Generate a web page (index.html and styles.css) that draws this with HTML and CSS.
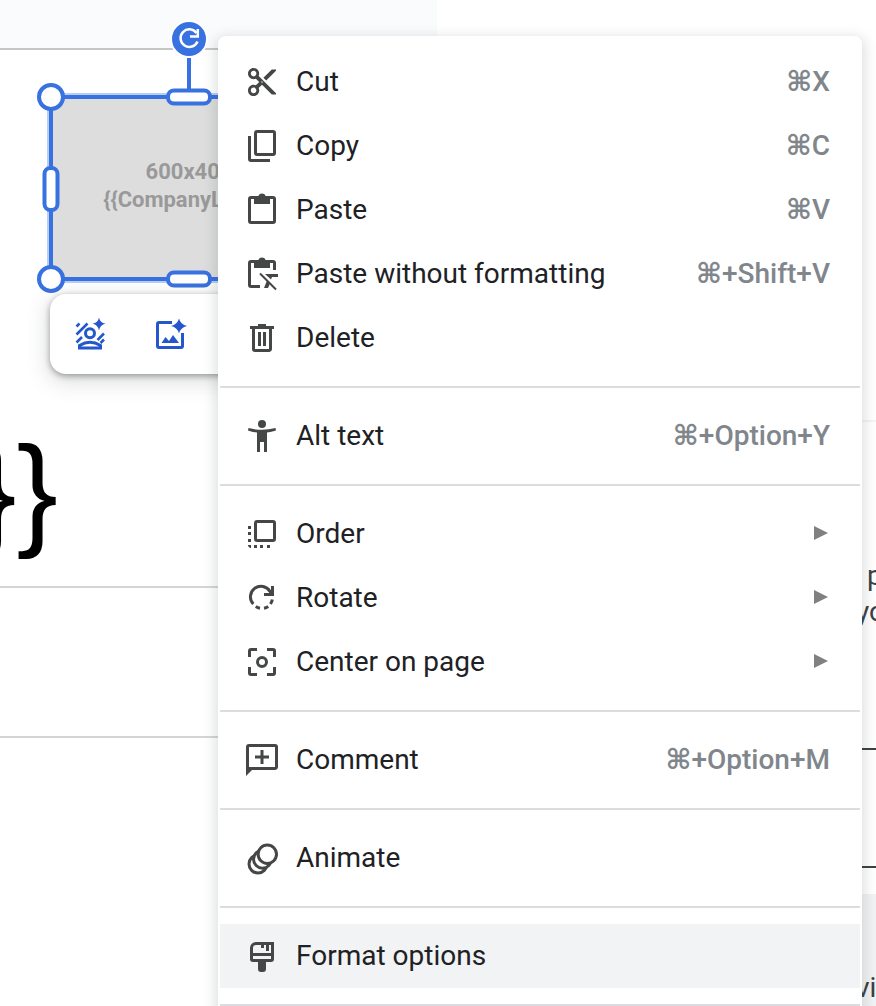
FILE: index.html
```html
<!DOCTYPE html>
<html lang="en">
<head>
<meta charset="utf-8">
<meta name="viewport" content="width=device-width, initial-scale=1">
<title>Slide editor</title>
<link rel="stylesheet" href="styles.css">
</head>
<body>
<div class="app">
  <main class="editor">
    <div class="ruler"></div>
    <section class="stage">
      <div class="picture">
        <p class="picture-text">600x400<br>{{CompanyLogo}}</p>
      </div>
      <svg class="selection" width="320" height="280" viewBox="0 0 320 280" fill="none" aria-hidden="true">
        <rect x="20" y="76" width="280" height="186" stroke="#b9cef4" stroke-width="4"/>
        <rect x="22" y="78" width="276" height="182" stroke="#3871e0" stroke-width="4"/>
        <path d="M160 39V72" stroke="#3871e0" stroke-width="4"/>
        <circle cx="160" cy="20" r="18" fill="#3871e0" stroke="#fff" stroke-width="2"/>
        <path d="M167.500 14A8.800 8.800 0 1 0 168.500 22.500" stroke="#fff" stroke-width="2.500"/>
        <path d="M168.800 10V17.500H161" stroke="#fff" stroke-width="2.500"/>
        <g fill="#fff" stroke="#3871e0" stroke-width="4">
          <circle cx="22" cy="78" r="12"/>
          <circle cx="22" cy="260" r="12"/>
          <rect x="139" y="71.500" width="42" height="13" rx="6"/>
          <rect x="139" y="253.500" width="42" height="13" rx="6"/>
          <rect x="15.500" y="149" width="13" height="42" rx="6"/>
        </g>
      </svg>
      <div class="image-tools" role="toolbar" aria-label="Image tools">
        <button class="tool" type="button" aria-label="Remove background">
          <svg class="icon" viewBox="0 0 36 36" fill="none" aria-hidden="true">
            <g stroke="currentColor" stroke-width="2.600">
              <path d="M4.500 10.500L7.500 7.500M4.500 18.500L15.500 7.500M4.500 26.500L10 21M25.500 24L32 17.500M28.500 27L32 23.500"/>
            </g>
            <circle cx="18" cy="17.300" r="4.500" stroke="currentColor" stroke-width="3"/>
            <path d="M7.500 32V29.500Q18 23 28.500 29.500V32Z" stroke="currentColor" stroke-width="3"/>
            <path d="M27 1.500Q28 7 33.500 7.800Q28 8.800 27 14.500Q26 8.800 20.500 7.800Q26 7 27 1.500Z" fill="currentColor"/>
          </svg>
        </button>
        <button class="tool" type="button" aria-label="Generate image">
          <svg class="icon" viewBox="0 0 36 36" fill="none" aria-hidden="true">
            <path d="M20 6.500H7A1.500 1.500 0 0 0 5.500 8V30A1.500 1.500 0 0 0 7 31.500H29A1.500 1.500 0 0 0 30.500 30V17" stroke="currentColor" stroke-width="3"/>
            <path d="M9.500 27L13.500 21L17 25L21 19L27 27Z" fill="currentColor"/>
            <path d="M27 2.500Q28.500 8.500 35 10Q28.500 11.500 27 17.500Q25.500 11.500 19 10Q25.500 8.500 27 2.500Z" fill="currentColor"/>
          </svg>
        </button>
      </div>
      <div class="slide-title">}}</div>
    </section>
    <section class="notes"></section>
  </main>

  <aside class="sidebar">
    <div class="side-text">
      <p class="side-line side-line-inset">p</p>
      <p class="side-line">yo</p>
    </div>
    <div class="side-box"></div>
    <div class="side-note">vi</div>
  </aside>

  <div class="menu" role="menu">
    <button class="item" type="button" role="menuitem">
      <svg class="icon" viewBox="0 0 36 36" aria-hidden="true"><path transform="translate(1.200 1.200) scale(1.400)" fill="currentColor" d="M9.640 7.640c.23-.5.36-1.050.36-1.640 0-2.210-1.790-4-4-4S2 3.790 2 6s1.790 4 4 4c.59 0 1.140-.13 1.640-.36L10 12l-2.360 2.360C7.140 14.130 6.590 14 6 14c-2.210 0-4 1.790-4 4s1.790 4 4 4 4-1.790 4-4c0-.59-.13-1.140-.36-1.640L12 14l7 7h3v-1L9.640 7.640zM6 8c-1.100 0-2-.89-2-2s.9-2 2-2 2 .89 2 2-.9 2-2 2zm0 12c-1.100 0-2-.89-2-2s.9-2 2-2 2 .89 2 2-.9 2-2 2zm6-7.500c-.28 0-.5-.22-.5-.5s.22-.5.5-.5.5.22.5.5-.22.5-.5.5zM19 3l-6 6 2 2 7-7V3h-3z"/></svg>
      <span class="label">Cut</span><span class="keys"><span class="cmd">⌘</span>X</span>
    </button>
    <button class="item" type="button" role="menuitem">
      <svg class="icon" viewBox="0 0 36 36" fill="none" stroke="currentColor" stroke-width="3" aria-hidden="true"><rect x="11.500" y="3.500" width="19" height="23" rx="1.500"/><path d="M5.500 8V31A1.500 1.500 0 0 0 7 32.500H26"/></svg>
      <span class="label">Copy</span><span class="keys"><span class="cmd">⌘</span>C</span>
    </button>
    <button class="item" type="button" role="menuitem">
      <svg class="icon" viewBox="0 0 36 36" fill="none" aria-hidden="true"><rect x="5.500" y="5.500" width="25" height="25" rx="1.500" stroke="currentColor" stroke-width="3"/><path fill="currentColor" fill-rule="evenodd" d="M10 12V4H14.300A4 4 0 0 1 21.700 4H26V12ZM18 4A1.500 1.500 0 1 0 18 7A1.500 1.500 0 1 0 18 4Z"/></svg>
      <span class="label">Paste</span><span class="keys"><span class="cmd">⌘</span>V</span>
    </button>
    <button class="item" type="button" role="menuitem">
      <svg class="icon" viewBox="0 0 36 36" fill="none" aria-hidden="true"><path d="M30.500 14V7A1.500 1.500 0 0 0 29 5.500H7A1.500 1.500 0 0 0 5.500 7V29A1.500 1.500 0 0 0 7 30.500H16" stroke="currentColor" stroke-width="3"/><path fill="currentColor" fill-rule="evenodd" d="M10 12V4H14.300A4 4 0 0 1 21.700 4H26V12ZM18 4A1.500 1.500 0 1 0 18 7A1.500 1.500 0 1 0 18 4Z"/><path d="M16 17.500L32 33.500" stroke="currentColor" stroke-width="2"/><path fill="currentColor" d="M21 18H34V21H28L27 23.500L21 18ZM23 24.500L26 27.500L24 32H20Z"/></svg>
      <span class="label">Paste without formatting</span><span class="keys"><span class="cmd">⌘</span>+Shift+V</span>
    </button>
    <button class="item" type="button" role="menuitem">
      <svg class="icon" viewBox="0 0 36 36" fill="none" aria-hidden="true"><path fill="currentColor" d="M6 6H14V4H22V6H30V9H6ZM14 12H17V26H14ZM19 12H22V26H19Z"/><path d="M9.500 8V29A1.500 1.500 0 0 0 11 30.500H25A1.500 1.500 0 0 0 26.500 29V8" stroke="currentColor" stroke-width="3"/></svg>
      <span class="label">Delete</span>
    </button>
    <hr class="separator">
    <button class="item" type="button" role="menuitem">
      <svg class="icon" viewBox="0 0 36 36" fill="currentColor" aria-hidden="true"><circle cx="18" cy="6" r="4"/><path d="M4.500 10Q18 13.500 31.500 10L32 12.500Q27.500 14 23 14.500V34H20V24H16V34H13V14.500Q8.500 14 4 12.500Z"/></svg>
      <span class="label">Alt text</span><span class="keys"><span class="cmd">⌘</span>+Option+Y</span>
    </button>
    <hr class="separator">
    <button class="item" type="button" role="menuitem" aria-haspopup="true">
      <svg class="icon" viewBox="0 0 36 36" fill="none" aria-hidden="true"><rect x="11.500" y="5.500" width="19" height="19" rx="1.500" stroke="currentColor" stroke-width="3"/><path fill="currentColor" d="M4 10H7V13H4ZM4 16H7V19H4ZM4 23H7V26H4ZM4 29H7V32H6L4 30ZM10 29H13V32H10ZM16 29H19V32H16ZM23 29H26V32H23Z"/></svg>
      <span class="label">Order</span><svg class="arrow" viewBox="0 0 16 16" aria-hidden="true"><path d="M0 0L14 7L0 14Z" fill="currentColor"/></svg>
    </button>
    <button class="item" type="button" role="menuitem" aria-haspopup="true">
      <svg class="icon" viewBox="0 0 36 36" fill="none" stroke="currentColor" stroke-width="3" aria-hidden="true"><path d="M9.300 24A10.500 10.500 0 1 1 26 11.500L28.500 14.500"/><path d="M28.500 6V14.500H20"/><path d="M11.800 26.500A10.500 10.500 0 0 0 16 28.300M20 28.300A10.500 10.500 0 0 0 24.200 26.500M26.500 24A10.500 10.500 0 0 0 28.300 19.500"/></svg>
      <span class="label">Rotate</span><svg class="arrow" viewBox="0 0 16 16" aria-hidden="true"><path d="M0 0L14 7L0 14Z" fill="currentColor"/></svg>
    </button>
    <button class="item" type="button" role="menuitem" aria-haspopup="true">
      <svg class="icon" viewBox="0 0 36 36" fill="none" stroke="currentColor" stroke-width="3" aria-hidden="true"><circle cx="18" cy="18" r="4.500"/><path d="M5.500 13V7A1.500 1.500 0 0 1 7 5.500H13M23 5.500H29A1.500 1.500 0 0 1 30.500 7V13M30.500 23V29A1.500 1.500 0 0 1 29 30.500H23M13 30.500H7A1.500 1.500 0 0 1 5.500 29V23"/></svg>
      <span class="label">Center on page</span><svg class="arrow" viewBox="0 0 16 16" aria-hidden="true"><path d="M0 0L14 7L0 14Z" fill="currentColor"/></svg>
    </button>
    <hr class="separator">
    <button class="item" type="button" role="menuitem">
      <svg class="icon" viewBox="0 0 36 36" fill="none" stroke="currentColor" stroke-width="3" aria-hidden="true"><path d="M3.500 27V5A1.500 1.500 0 0 1 5 3.500H31A1.500 1.500 0 0 1 32.500 5V25A1.500 1.500 0 0 1 31 26.500H5M18 8V22M11 15H25"/><path d="M2 26V34L9 27Z" fill="currentColor" stroke="none"/></svg>
      <span class="label">Comment</span><span class="keys"><span class="cmd">⌘</span>+Option+M</span>
    </button>
    <hr class="separator">
    <button class="item" type="button" role="menuitem">
      <svg class="icon" viewBox="0 0 36 36" fill="#fff" stroke="currentColor" stroke-width="3" aria-hidden="true"><circle cx="14" cy="24" r="9"/><circle cx="18.500" cy="19.200" r="9"/><circle cx="23.300" cy="14.300" r="9.200"/></svg>
      <span class="label">Animate</span>
    </button>
    <hr class="separator">
    <button class="item item-active" type="button" role="menuitem">
      <svg class="icon" viewBox="0 0 36 36" fill="none" aria-hidden="true"><path d="M12 5.500H28.500V21A1.500 1.500 0 0 1 27 22.500H9A1.500 1.500 0 0 1 7.500 21V10A4.500 4.500 0 0 1 12 5.500ZM7 16.500H29" stroke="currentColor" stroke-width="3"/><path fill="currentColor" d="M17 5H20V10H17ZM22 5H25V13H22ZM14 23H22V31A3 3 0 0 1 19 34H17A3 3 0 0 1 14 31Z"/></svg>
      <span class="label">Format options</span>
    </button>
    <hr class="separator">
  </div>
</div>
</body>
</html>
```
FILE: styles.css
```css
* {
  box-sizing: border-box;
}

body {
  margin: 0;
  background: #fff;
  color: #202124;
  font-family: Roboto, "Liberation Sans", sans-serif;
}

p {
  margin: 0;
}

button {
  border: 0;
  padding: 0;
  background: none;
  font: inherit;
  color: inherit;
}

.app {
  position: relative;
  display: flex;
  height: 100vh;
  overflow: hidden;
}

.icon {
  flex: none;
  width: 36px;
  height: 36px;
}

/* Editor */

.editor {
  flex: 1;
  display: grid;
  grid-template-rows: 50px 538px 150px 1fr;
}

.ruler {
  width: 437px;
  border-bottom: 2px solid #c4c7c5;
  background: #f9fbfd;
}

.stage {
  position: relative;
  border-bottom: 2px solid #d5d5d5;
}

.notes {
  border-bottom: 2px solid #d5d5d5;
}

.picture {
  position: absolute;
  left: 51px;
  top: 47px;
  width: 276px;
  height: 182px;
  display: grid;
  place-items: center;
  background: #ddd;
}

.picture-text {
  padding-bottom: 4px;
  color: #999;
  font-size: 22px;
  font-weight: 700;
  line-height: 28px;
  text-align: center;
}

.selection {
  position: absolute;
  left: 29px;
  top: -31px;
}

.image-tools {
  position: absolute;
  left: 50px;
  top: 244px;
  display: flex;
  gap: 44px;
  width: 278px;
  padding: 22px;
  border-radius: 16px;
  background: #fff;
  color: #2557cc;
  box-shadow: 0 2px 6px rgba(0, 0, 0, 0.35), 0 6px 20px 4px rgba(60, 64, 67, 0.15);
}

.tool {
  display: flex;
}

.slide-title {
  position: absolute;
  left: -25px;
  top: 368px;
  color: #000;
  font-family: "Liberation Sans", Arial, sans-serif;
  font-size: 124px;
  line-height: 144px;
}

/* Sidebar */

.sidebar {
  flex: none;
  width: 20px;
  margin-top: 420px;
  overflow: hidden;
  border-top: 2px solid #f4f5f5;
  color: #3c4043;
  font-size: 28px;
  line-height: 36px;
}

.side-text {
  height: 326px;
  padding-top: 136px;
}

.side-line-inset {
  padding-left: 11px;
}

.side-box {
  height: 120px;
  margin-bottom: 26px;
  border: solid #3c4043;
  border-width: 2px 0;
}

.side-note {
  height: 112px;
  padding-top: 76px;
  background: #f1f3f4;
}

/* Context menu */

.menu {
  position: absolute;
  left: 218px;
  right: 14px;
  top: 36px;
  padding: 14px 2px;
  border-radius: 8px;
  background: #fff;
  box-shadow: 0 4px 12px 4px rgba(60, 64, 67, 0.15);
}

.item {
  display: flex;
  align-items: center;
  width: 100%;
  height: 64px;
  padding: 0 30px 0 24px;
  color: #444746;
  font-size: 28px;
  line-height: 36px;
  text-align: left;
}

.item-active {
  background: #f1f3f4;
}

.label {
  flex: 1;
  padding-left: 16px;
  color: #202124;
}

.keys {
  color: #80868b;
  font-weight: 500;
}

.cmd {
  font-family: "DejaVu Sans", sans-serif;
  font-weight: 700;
  font-size: 28px;
  line-height: 1;
}

.arrow {
  width: 16px;
  height: 16px;
  color: #808080;
}

.separator {
  height: 2px;
  margin: 16px 0;
  border: 0;
  background: #dadce0;
}
```
